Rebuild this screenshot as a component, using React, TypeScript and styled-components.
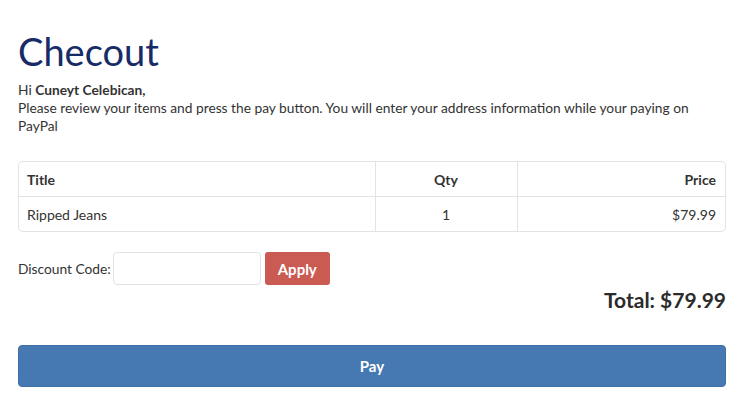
import React from "react";
import styled, { createGlobalStyle } from "styled-components";

const Global = createGlobalStyle`
  html, body { margin: 0; padding: 0; background: #fff; }
  body {
    font-family: Lato, "Open Sans", "Liberation Sans", sans-serif;
    font-size: 14px;
    color: #333;
  }
  * { box-sizing: border-box; }
`;

const Page = styled.div`
  padding: 0 13px 0 18px;
  width: 739px;
`;

const Title = styled.h1`
  margin: 27px 0 6px;
  font-size: 38px;
  font-weight: 400;
  line-height: 48px;
  color: #172b67;
`;

const Intro = styled.p`
  margin: 0 0 26px;
  line-height: 18px;
  font-size: 13.75px;
`;

const Table = styled.div`
  border: 1px solid #e3e3e3;
  border-radius: 5px;
  display: grid;
  grid-template-columns: 357px 142px 1fr;
  overflow: hidden;
`;

const Cell = styled.div<{ $align?: "left" | "center" | "right"; $head?: boolean; $last?: boolean; $bottom?: boolean }>`
  height: ${(p) => (p.$head ? 35 : 34)}px;
  display: flex;
  align-items: center;
  justify-content: ${(p) => (p.$align === "center" ? "center" : p.$align === "right" ? "flex-end" : "flex-start")};
  padding: 0 9px 0 8px;
  font-weight: ${(p) => (p.$head ? 700 : 400)};
  font-size: 14px;
  border-right: ${(p) => (p.$last ? "none" : "1px solid #e3e3e3")};
  border-bottom: ${(p) => (p.$bottom ? "none" : "1px solid #e3e3e3")};
`;

const DiscountRow = styled.div`
  margin-top: 20px;
  display: flex;
  align-items: center;
`;

const Label = styled.label`
  font-size: 13.75px;
  margin-right: 2px;
`;

const Input = styled.input`
  width: 148px;
  height: 33px;
  border: 1px solid #e2e2e2;
  border-radius: 4px;
  outline: none;
  padding: 0 8px;
`;

const ApplyButton = styled.button`
  margin-left: 4px;
  width: 65px;
  height: 33px;
  border: none;
  border-radius: 3px;
  background: #c95b52;
  color: #fff;
  font-family: inherit;
  font-weight: 700;
  font-size: 15px;
`;

const Total = styled.div`
  text-align: right;
  font-size: 21px;
  font-weight: 700;
  color: #2b2b2b;
  margin-top: 2px;
  line-height: 26px;
`;

const PayButton = styled.button`
  display: block;
  margin-top: 32px;
  width: 100%;
  height: 42px;
  border: 1px solid #3e6ea6;
  border-radius: 4px;
  background: #4679b2;
  color: #fff;
  font-family: inherit;
  font-weight: 700;
  font-size: 15px;
`;

export default function App() {
  return (
    <>
      <Global />
      <Page>
        <Title>Checout</Title>
        <Intro>
          Hi <b>Cuneyt Celebican,</b>
          <br />
          Please review your items and press the pay button. You will enter your address information while your paying on PayPal
        </Intro>
        <Table>
          <Cell $head>Title</Cell>
          <Cell $head $align="center">Qty</Cell>
          <Cell $head $align="right" $last>Price</Cell>
          <Cell $bottom>Ripped Jeans</Cell>
          <Cell $bottom $align="center">1</Cell>
          <Cell $bottom $align="right" $last>$79.99</Cell>
        </Table>
        <DiscountRow>
          <Label>Discount Code:</Label>
          <Input />
          <ApplyButton>Apply</ApplyButton>
        </DiscountRow>
        <Total>Total: $79.99</Total>
        <PayButton>Pay</PayButton>
      </Page>
    </>
  );
}
